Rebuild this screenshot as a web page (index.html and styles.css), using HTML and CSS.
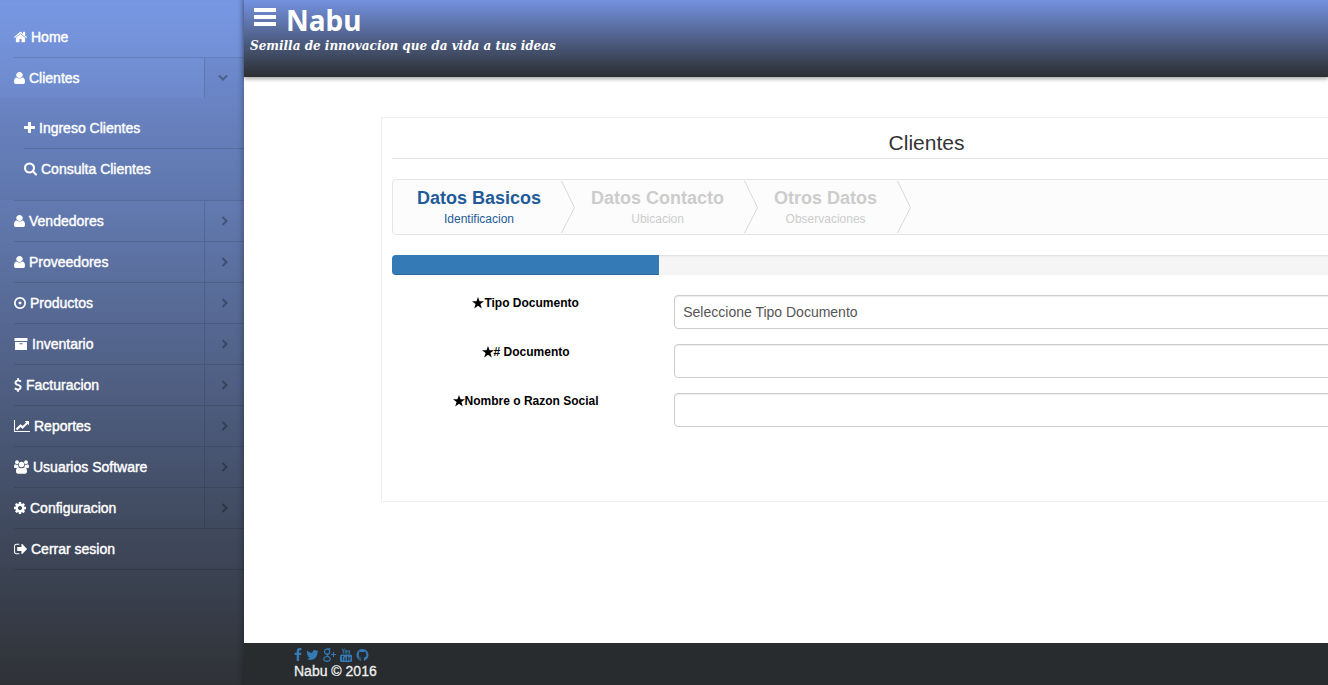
FILE: index.html
```html
<!DOCTYPE html>
<html lang="es">
<head>
<meta charset="utf-8">
<title>Nabu</title>
<link rel="stylesheet" href="styles.css">
</head>
<body>
<svg class="sprite" aria-hidden="true">
  <symbol id="user" viewBox="256 128 1280 1536" preserveAspectRatio="none"><path d="M1536 1399q0 109-62.500 187t-150.500 78h-854q-88 0-150.500-78t-62.500-187q0-85 8.500-160.500t31.500-152 58.500-131 94-89 134.500-34.500q131 128 313 128t313-128q76 0 134.500 34.500t94 89 58.500 131 31.500 152 8.500 160.500zm-256-887q0 159-112.500 271.500t-271.500 112.500-271.500-112.500-112.500-271.500 112.500-271.500 271.500-112.500 271.500 112.500 112.500 271.500z"/></symbol>
  <symbol id="chevron" viewBox="0 0 8 10"><path d="M1.500 1l4 4-4 4" fill="none" stroke="currentColor" stroke-width="2"/></symbol>
  <symbol id="star" viewBox="0 0 12 12"><path d="M6 0l1.500 4.300H12L8.400 7l1.400 4.500L6 8.800l-3.800 2.700L3.600 7 0 4.300h4.500z"/></symbol>
  <symbol id="tip" viewBox="0 0 14 54"><path d="M.5 1L13.500 27.500.5 53" fill="none" stroke="currentColor" stroke-width="1"/></symbol>
</svg>
<div class="app">
  <nav class="sidebar" aria-label="Menu principal">
    <ul class="menu">
      <li class="item"><a class="link" href="#"><svg class="icon w13" viewBox="90 250 1612 1286"><path d="M1472 992v480q0 26-19 45t-45 19h-384v-384h-256v384h-384q-26 0-45-19t-19-45v-480q0-1 .5-3t.5-3l575-474 575 474q1 2 1 6zm223-69l-62 74q-8 9-21 11h-3q-13 0-21-7l-692-577-692 577q-12 8-24 7-13-2-21-11l-62-74q-8-10-7-23.500t11-21.500l719-599q32-26 76-26t76 26l244 204v-195q0-14 9-23t23-9h192q14 0 23 9t9 23v408l219 182q10 8 11 21.500t-7 23.500z"/></svg>Home</a></li>
      <li class="item open"><a class="link" href="#"><svg class="icon w11"><use href="#user"/></svg>Clientes</a><button class="expand" aria-label="Cerrar Clientes"><svg class="chevron"><use href="#chevron"/></svg></button></li>
    </ul>
    <ul class="submenu">
      <li class="item"><a class="link" href="#"><svg class="icon w11" viewBox="192 192 1408 1408"><path d="M1600 736v192q0 40-28 68t-68 28h-416v416q0 40-28 68t-68 28h-192q-40 0-68-28t-28-68v-416h-416q-40 0-68-28t-28-68v-192q0-40 28-68t68-28h416v-416q0-40 28-68t68-28h192q40 0 68 28t28 68v416h416q40 0 68 28t28 68z"/></svg>Ingreso Clientes</a></li>
      <li class="item"><a class="link" href="#"><svg class="icon tall w13" viewBox="64 128 1664 1664"><path d="M1216 832q0-185-131.500-316.500t-316.500-131.500-316.500 131.500-131.500 316.500 131.500 316.500 316.500 131.500 316.500-131.500 131.500-316.500zm512 832q0 52-38 90t-90 38q-54 0-90-38l-343-342q-179 124-399 124-143 0-273.500-55.500t-225-150-150-225-55.500-273.500 55.500-273.500 150-225 225-150 273.500-55.500 273.500 55.500 225 150 150 225 55.500 273.500q0 220-124 399l343 343q37 37 37 90z"/></svg>Consulta Clientes</a></li>
    </ul>
    <ul class="menu lower">
      <li class="item"><a class="link" href="#"><svg class="icon w11"><use href="#user"/></svg>Vendedores</a><button class="expand" aria-label="Abrir Vendedores"><svg class="chevron"><use href="#chevron"/></svg></button></li>
      <li class="item"><a class="link" href="#"><svg class="icon w11"><use href="#user"/></svg>Proveedores</a><button class="expand" aria-label="Abrir Proveedores"><svg class="chevron"><use href="#chevron"/></svg></button></li>
      <li class="item"><a class="link" href="#"><svg class="icon w12" viewBox="128 128 1536 1536"><path d="M1088 896q0 80-56 136t-136 56-136-56-56-136 56-136 136-56 136 56 56 136zm-192-544q-148 0-273 73t-198 198-73 273 73 273 198 198 273 73 273-73 198-198 73-273-73-273-198-198-273-73zm768 544q0 209-103 385.500t-279.500 279.500-385.500 103-385.500-103-279.500-279.500-103-385.500 103-385.500 279.500-279.500 385.500-103 385.500 103 279.500 279.500 103 385.500z"/></svg>Productos</a><button class="expand" aria-label="Abrir Productos"><svg class="chevron"><use href="#chevron"/></svg></button></li>
      <li class="item"><a class="link" href="#"><svg class="icon w14" viewBox="0 0 14 12"><path fill-rule="evenodd" d="M.5 0h13v3H.5zM1 4h12v8H1zM5.500 5.300v1h3v-1z"/></svg>Inventario</a><button class="expand" aria-label="Abrir Inventario"><svg class="chevron"><use href="#chevron"/></svg></button></li>
      <li class="item"><a class="link" href="#"><svg class="icon tall w8" viewBox="400 0 1000 1792"><path d="M1362 1185q0 153-99.500 263.500t-258.500 136.500v175q0 14-9 23t-23 9h-135q-13 0-22.500-9.500t-9.500-22.500v-175q-66-9-127.500-31t-101.500-44.500-74-48-46.500-37.500-17.500-18q-17-21-2-41l103-135q7-10 23-12 15-2 24 9l2 2q113 99 243 125 37 8 74 8 81 0 142.500-43t61.500-122q0-28-15-53t-33.500-42-58.500-37.500-66-32-80-32.500q-39-16-61.500-25t-61.500-26.500-62.500-31-56.500-35.500-53.500-42.500-43.500-49-35.500-58-21-66.500-8.500-78q0-138 98-242t255-134v-180q0-13 9.500-22.500t22.500-9.500h135q14 0 23 9t9 23v176q57 6 110.500 23t87 33.500 63.500 37.500 39 29 15 14q17 18 5 38l-81 146q-8 15-23 16-14 3-27-7-3-3-14.500-12t-39-26.500-58.500-32-74.500-26-85.500-11.500q-95 0-155 43t-60 111q0 26 8.500 48t29.500 41.500 39.500 33 56 31 60.500 27 70 27.500q53 20 81 31.500t76 35 75.500 42.500 62 50 53 63.500 31.500 76.500 13 94z"/></svg>Facturacion</a><button class="expand" aria-label="Abrir Facturacion"><svg class="chevron"><use href="#chevron"/></svg></button></li>
      <li class="item"><a class="link" href="#"><svg class="icon w16" viewBox="0 128 2048 1536"><path d="M2048 1536v128h-2048v-1536h128v1408h1920zm-128-1248v435q0 21-19.500 29.500t-35.500-7.500l-121-121-633 633q-10 10-23 10t-23-10l-233-233-416 416-192-192 585-585q10-10 23-10t23 10l233 233 464-464-121-121q-16-16-7.500-35.500t29.500-19.500h435q14 0 23 9t9 23z"/></svg>Reportes</a><button class="expand" aria-label="Abrir Reportes"><svg class="chevron"><use href="#chevron"/></svg></button></li>
      <li class="item"><a class="link" href="#"><svg class="icon tall w15" viewBox="0 0 15 14"><circle cx="3" cy="2.200" r="1.900"/><circle cx="12" cy="2.200" r="1.900"/><circle cx="7.500" cy="4.500" r="2.700"/><path d="M0 7c0-2 .4-2.800 1.300-2.800.8.500 1.800.7 2.800.5 0 1 .2 1.700.7 2.300C4 7 3.400 7.400 3 8H1.500C.6 8 0 7.700 0 7zM15 7c0-2-.4-2.800-1.300-2.800-.8.500-1.800.7-2.800.5 0 1-.2 1.700-.7 2.300.8 0 1.400.4 1.800 1h1.500c.9 0 1.500-.3 1.500-1zM4.300 7.300c2 1.400 4.400 1.400 6.400 0 1.600.2 2.300 2 2.300 4.300 0 1.400-.7 2.100-2 2.100H4c-1.300 0-2-.7-2-2.100 0-2.300.7-4.100 2.300-4.300z"/></svg>Usuarios Software</a><button class="expand" aria-label="Abrir Usuarios Software"><svg class="chevron"><use href="#chevron"/></svg></button></li>
      <li class="item"><a class="link" href="#"><svg class="icon w12" viewBox="128 128 1536 1536"><path d="M1152 896q0-106-75-181t-181-75-181 75-75 181 75 181 181 75 181-75 75-181zm512-109v222q0 12-8 23t-20 13l-185 28q-19 54-39 91 35 50 107 138 10 12 10 25t-9 23q-27 37-99 108t-94 71q-12 0-26-9l-138-108q-44 23-91 38-16 136-29 186-7 28-36 28h-222q-14 0-24.500-8.500t-11.500-21.500l-28-184q-49-16-90-37l-141 107q-10 9-25 9-14 0-25-11-126-114-165-168-7-10-7-23 0-12 8-23 15-21 51-66.500t54-70.500q-27-50-41-99l-183-27q-13-2-21-12.500t-8-23.500v-222q0-12 8-23t19-13l186-28q14-46 39-92-40-57-107-138-10-12-10-24 0-10 9-23 26-36 98.500-107.500t94.500-71.500q13 0 26 10l138 107q44-23 91-38 16-136 29-186 7-28 36-28h222q14 0 24.500 8.500t11.500 21.500l28 184q49 16 90 37l142-107q9-9 24-9 13 0 25 10 129 119 165 170 7 8 7 22 0 12-8 23-15 21-51 66.500t-54 70.500q26 50 41 98l183 28q13 2 21 12.500t8 23.500z"/></svg>Configuracion</a><button class="expand" aria-label="Abrir Configuracion"><svg class="chevron"><use href="#chevron"/></svg></button></li>
      <li class="item"><a class="link" href="#"><svg class="icon w13" viewBox="64 192 1568 1408"><path d="M704 1440q0 4 1 20t.5 26.500-3 23.500-10 19.500-20.500 6.500h-320q-119 0-203.500-84.500t-84.500-203.500v-704q0-119 84.500-203.500t203.500-84.500h320q13 0 22.500 9.500t9.500 22.500q0 4 1 20t.5 26.500-3 23.500-10 19.500-20.500 6.500h-320q-66 0-113 47t-47 113v704q0 66 47 113t113 47h312l11.500 1 11.500 3 8 5.500 7 9 2 13.500zm928-544q0 26-19 45l-544 544q-19 19-45 19t-45-19-19-45v-288h-448q-26 0-45-19t-19-45v-384q0-26 19-45t45-19h448v-288q0-26 19-45t45-19 45 19l544 544q19 19 19 45z"/></svg>Cerrar sesion</a></li>
    </ul>
  </nav>

  <div class="page">
    <header class="topbar">
      <div class="brand">
        <button class="burger" aria-label="Menu"><svg width="22" height="18" viewBox="0 0 22 18"><path d="M0 0h22v4H0zM0 7h22v4H0zM0 14h22v4H0z"/></svg></button>
        <h1 class="name">Nabu</h1>
      </div>
      <p class="slogan">Semilla de innovacion que da vida a tus ideas</p>
    </header>

    <main class="content">
      <section class="panel">
        <h2 class="title">Clientes</h2>
        <ol class="steps">
          <li class="step active"><a class="step-link" href="#"><span class="step-name">Datos Basicos</span><span class="step-note">Identificacion</span></a><svg class="tip"><use href="#tip"/></svg></li>
          <li class="step"><a class="step-link" href="#"><span class="step-name">Datos Contacto</span><span class="step-note">Ubicacion</span></a><svg class="tip"><use href="#tip"/></svg></li>
          <li class="step"><a class="step-link" href="#"><span class="step-name">Otros Datos</span><span class="step-note">Observaciones</span></a><svg class="tip"><use href="#tip"/></svg></li>
        </ol>
        <div class="progress" role="progressbar" aria-label="Avance" aria-valuenow="25"><div class="bar" style="width:25%"></div></div>
        <form class="form">
          <label class="label" for="tipo"><svg class="star"><use href="#star"/></svg>Tipo Documento</label>
          <select class="field" id="tipo"><option>Seleccione Tipo Documento</option></select>
          <label class="label" for="doc"><svg class="star"><use href="#star"/></svg># Documento</label>
          <input class="field" id="doc" type="text">
          <label class="label" for="nombre"><svg class="star"><use href="#star"/></svg>Nombre o Razon Social</label>
          <input class="field" id="nombre" type="text">
        </form>
      </section>
    </main>

    <footer class="footer">
      <div class="social">
        <a class="social-link" href="#" aria-label="Facebook"><svg width="8" height="14" viewBox="450 0 900 1792"><path d="M1343 12v264h-157q-86 0-116 36t-30 108v189h293l-39 296h-254v759h-306v-759h-255v-296h255v-218q0-186 104-288.500t277-102.500q147 0 228 12z"/></svg></a>
        <a class="social-link" href="#" aria-label="Twitter"><svg width="13" height="14" viewBox="64 0 1664 1792"><path d="M1684 408q-67 98-162 167 1 14 1 42 0 130-38 259.500t-115.500 248.500-184.500 210.500-258 146-323 54.500q-271 0-496-145 35 4 78 4 225 0 401-138-105-2-188-64.500t-114-159.500q33 5 61 5 43 0 85-11-112-23-185.500-111.500t-73.500-205.500v-4q68 38 146 41-66-44-105-115t-39-154q0-88 44-163 121 149 294.500 238.500t371.500 99.500q-8-38-8-74 0-134 94.500-228.500t228.500-94.500q140 0 236 102 109-21 205-78-37 115-142 178 93-10 186-50z"/></svg></a>
        <a class="social-link" href="#" aria-label="Google Plus"><svg width="13" height="14" viewBox="0 0 13 14"><path d="M7.500.9H4.600C2.700.9 1.500 2 1.500 3.600s1.100 2.600 2.700 2.600S6.700 5.200 6.700 3.800 5.600.9 4.300.9M4.600 6.300c-.8.800-.4 1.400.4 2 1.300.9 2.300 1.500 2.300 2.800 0 1.500-1.300 2.200-3.300 2.200S.7 12.500.7 11s1.400-2.500 4-2.500" fill="none" stroke="currentColor" stroke-width="1.200"/><path d="M10 4h1v2h2v1h-2v2h-1V7H8V6h2z"/></svg></a>
        <a class="social-link" href="#" aria-label="YouTube"><svg width="12" height="14" viewBox="0 0 12 14"><path d="M2 .5l1.300 2.600V5.500M4.600.5L3.300 3.100M5.200 2.500v2.300q0 .5.600.5t.6-.5V2.500q0-.5-.6-.5t-.6.500M8 2v2.800q0 .6.600.5l.9-.5M9.600 2v3.500" fill="none" stroke="currentColor" stroke-width=".9"/><path fill-rule="evenodd" d="M1.500 6.500h9q1.500 0 1.500 1.500v4.500q0 1.500-1.500 1.500h-9Q0 14 0 12.500V8q0-1.500 1.500-1.500zM1.500 8v.8h.7v3.700h.8V8.800h.7V8zM4.500 9.300v3.200h1.600V9.300h-.5v2.500h-.5V9.300zM7 8v4.500h1.500V9.300h-.8V8zM9.300 9.300v3.200h1.400v-.8h-.7v-.8h.7V9.300z"/></svg></a>
        <a class="social-link" href="#" aria-label="GitHub"><svg width="13" height="14" viewBox="64 0 1664 1792"><path d="M896 128q209 0 385.500 103t279.500 279.500 103 385.500q0 251-146.500 451.500t-378.500 277.500q-27 5-40-7t-13-30q0-3 .5-76.500t.5-134.500q0-97-52-142 57-6 102.500-18t94-39 81-66.500 53-105 20.500-150.500q0-119-79-206 37-91-8-204-28-9-81 11t-92 44l-38 24q-93-26-192-26t-192 26q-16-11-42.500-27t-83.500-38.500-85-13.500q-45 113-8 204-79 87-79 206 0 85 20.500 150t52.500 105 80.500 67 94 39 102.500 18q-39 36-49 103-21 10-45 15t-57 5-65.500-21.500-55.500-62.500q-19-32-48.500-52t-49.500-24l-20-3q-21 0-29 4.500t-5 11.500 9 14 13 12l7 5q22 10 43.500 38t31.500 51l10 23q13 38 44 61.500t67 30 69.500 7 55.500-3.500l23-4q0 38 .5 88.500t.5 54.500q0 18-13 30t-40 7q-232-77-378.500-277.500t-146.500-451.500q0-209 103-385.500t279.500-279.500 385.500-103z"/></svg></a>
      </div>
      <p class="copyright">Nabu © 2016</p>
    </footer>
  </div>
</div>
</body>
</html>
```

FILE: styles.css
```css
*, *::before, *::after { box-sizing: border-box; }

body {
  margin: 0;
  background: #fff;
  color: #333;
  font: 14px/20px "Liberation Sans", Arial, sans-serif;
}

h1, h2, p, ol, ul { margin: 0; padding: 0; }
ol, ul { list-style: none; }
a { color: inherit; text-decoration: none; }
button { margin: 0; padding: 0; border: 0; background: none; color: inherit; font: inherit; }
svg { display: block; flex: none; fill: currentColor; }
.sprite { position: absolute; width: 0; height: 0; }

.app { display: flex; min-height: 100vh; overflow: hidden; }

/* Side menu */
.sidebar {
  flex: none;
  width: 244px;
  padding-top: 17px;
  background: linear-gradient(#7898e4, #2f3236);
  box-shadow: inset -6px 0 6px -5px rgba(0, 0, 0, .3);
  color: #fff;
}
.menu { padding-left: 14px; }
.item { display: flex; height: 41px; border-bottom: 1px solid rgba(0, 0, 0, .12); }
.item.open { height: 40px; border-bottom: 0; }
.link {
  display: flex;
  flex: 1;
  align-items: center;
  gap: 4px;
  -webkit-text-stroke: 0.4px currentColor;
}
.icon { height: 12px; }
.tall { height: 14px; }
.w8 { width: 8px; }
.w11 { width: 11px; }
.w12 { width: 12px; }
.w13 { width: 13px; }
.w14 { width: 14px; }
.w15 { width: 15px; }
.w16 { width: 16px; }
.expand {
  display: flex;
  align-items: center;
  justify-content: center;
  width: 40px;
  border-left: 1px solid rgba(0, 0, 0, .12);
  color: rgba(0, 0, 0, .3);
}
.chevron { width: 8px; height: 10px; }
.open .expand { padding-right: 3px; background: rgba(0, 0, 0, .03); }
.open .chevron { transform: rotate(90deg); }
.submenu { padding: 10px 0 10px 24px; background: rgba(0, 0, 0, .03); }
.submenu .item:last-child { border-bottom-color: transparent; }
.lower .item:first-child { height: 42px; border-top: 1px solid rgba(0, 0, 0, .12); }

/* Page */
.page { display: flex; flex: 1; flex-direction: column; min-width: 0; }
.topbar {
  height: 77px;
  padding: 4px 6px 0;
  background: linear-gradient(#7492e0, #2c2f31);
  box-shadow: 0 2px 4px rgba(0, 0, 0, .35);
  color: #fff;
}
.brand { display: flex; align-items: center; gap: 10px; height: 32px; padding-left: 4px; }
.burger { display: flex; align-items: flex-start; height: 24px; }
.name { font: bold 28px/32px "Noto Sans", sans-serif; }
.slogan { font: italic bold 12px/20px "DejaVu Serif", serif; }

.content { flex: 1; padding-top: 40px; }
.panel {
  min-height: 385px;
  margin: 0 -144px 0 137px;
  padding: 10px;
  border: 1px solid #eee;
}
.title {
  padding: 2px 0;
  border-bottom: 1px solid #e5e5e5;
  font-size: 21px;
  font-weight: normal;
  line-height: 26px;
  text-align: center;
}
.steps {
  display: flex;
  height: 56px;
  margin-top: 20px;
  padding-left: 8px;
  border: 1px solid #e5e5e5;
  border-radius: 4px;
  background: #fcfcfc;
  color: #ccc;
}
.step { display: flex; }
.step.active { color: #1f5b99; }
.step-link { padding: 8px 20px 0 16px; text-align: center; }
.step-name, .step-note { display: block; }
.step-name { font-size: 18px; font-weight: bold; }
.step-note { font-size: 12px; line-height: 22px; }
.tip { width: 14px; height: 54px; color: #d8d8d8; }

.progress {
  height: 20px;
  margin-top: 20px;
  overflow: hidden;
  border-radius: 4px;
  background: #f5f5f5;
  box-shadow: inset 0 1px 2px rgba(0, 0, 0, .1);
}
.bar { height: 100%; background: #337ab7; box-shadow: inset 0 -1px 0 rgba(0, 0, 0, .15); }

.form {
  display: grid;
  grid-template-columns: 1fr 3fr;
  row-gap: 15px;
  margin-top: 20px;
}
.label {
  display: flex;
  align-items: center;
  justify-content: center;
  height: 16px;
  color: #000;
  font-size: 12px;
  font-weight: bold;
  line-height: 16px;
}
.star { width: 12px; height: 12px; }
.field {
  height: 34px;
  margin: 0 15px;
  padding: 0 8px;
  appearance: none;
  border: 1px solid #ccc;
  border-radius: 4px;
  background: #fff;
  box-shadow: inset 0 1px 1px rgba(0, 0, 0, .075);
  color: #555;
  font: inherit;
}

.footer { padding: 5px 50px; background: #282c2e; color: #eee; }
.social { display: flex; gap: 4px; color: #337ab7; }
.copyright { line-height: 18px; -webkit-text-stroke: 0.3px currentColor; }
```
